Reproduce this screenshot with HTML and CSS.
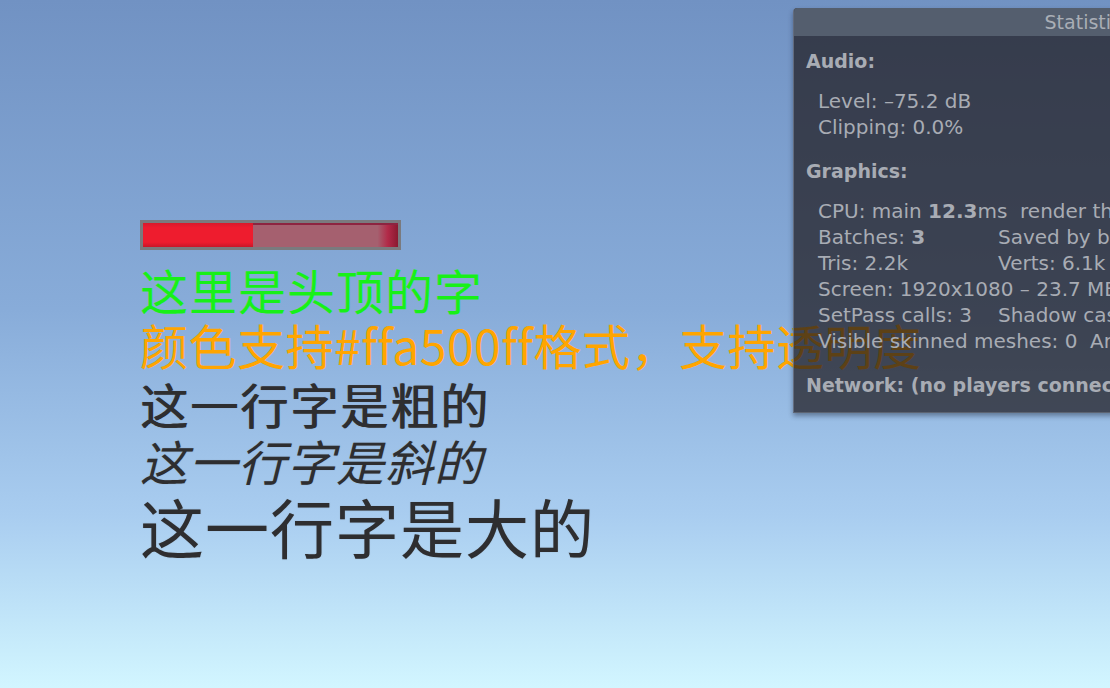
FILE: index.html
```html
<!DOCTYPE html>
<html lang="zh">
<head>
<meta charset="utf-8">
<title>HUD</title>
<link rel="stylesheet" href="styles.css">
</head>
<body>
<main class="scene">
  <div class="hp-bar"><div class="hp-fill" style="width:43%"></div></div>
  <div class="label">
    <div class="line green">这里是头顶的字</div>
    <div class="line orange">颜色支持#ffa500ff格式，支持透明度</div>
    <div class="line dark bold">这一行字是粗的</div>
    <div class="line dark italic">这一行字是斜的</div>
    <div class="line dark big">这一行字是大的</div>
  </div>
</main>
<section class="stats">
  <header class="stats-title">Statistics</header>
  <div class="stats-body">
    <h3 class="sec">Audio:</h3>
    <div class="rows">
      <div class="row">Level: –75.2 dB</div>
      <div class="row">Clipping: 0.0%</div>
    </div>
    <h3 class="sec">Graphics:</h3>
    <div class="rows">
      <div class="row">CPU: main <b>12.3</b>ms&nbsp; render thread <b>0.4</b>ms</div>
      <div class="row two"><span>Batches: <b>3</b></span><span>Saved by batching: 0</span></div>
      <div class="row two"><span>Tris: 2.2k</span><span>Verts: 6.1k</span></div>
      <div class="row">Screen: 1920x1080 – 23.7 MB</div>
      <div class="row two"><span>SetPass calls: 3</span><span>Shadow casters: 0</span></div>
      <div class="row">Visible skinned meshes: 0&nbsp; Animations: 0</div>
    </div>
    <h3 class="sec">Network: (no players connected)</h3>
  </div>
</section>
</body>
</html>
```

FILE: styles.css
```css
html, body {
  margin: 0;
  height: 100%;
}
body {
  width: 1110px;
  height: 688px;
  overflow: hidden;
  position: relative;
  background: linear-gradient(to bottom, #7192c3 0%, #88acd9 45%, #a9cdf0 75%, #d2f6ff 100%);
  font-family: "Noto Sans CJK SC", "Noto Sans", sans-serif;
}
.scene {
  padding: 220px 0 0 140px;
}
.hp-bar {
  width: 255px;
  height: 24px;
  border: 3px solid #7a7a7e;
  background: linear-gradient(to right, #a5606f 0%, #a5606f 92%, #b22a48 96%, #8a1a30 100%);
  box-shadow: inset 0 2px 0 #8d2440;
}
.hp-fill {
  height: 100%;
  background: linear-gradient(to bottom, #d81a2c 0%, #ee1c2e 20%, #ee1c2e 80%, #c81628 100%);
}
.label {
  margin-top: 11px;
}
.line {
  font-size: 48px;
  line-height: 57px;
  white-space: nowrap;
  letter-spacing: 1px;
}
.green { color: #18f018; }
.orange { color: #ffa500; margin-top: -2px; letter-spacing: 0.5px; }
.dark {
  color: #2e2e30;
  text-shadow: 0 0 1px rgba(120,130,140,0.6);
}
.bold {
  letter-spacing: 2px;
  text-shadow: 1px 0 0 #2e2e30, 0 0 1px rgba(120,130,140,0.6);
  margin-top: 2px;
}
.italic { font-style: italic; letter-spacing: 1px; }
.big {
  font-size: 64px;
  line-height: 72px;
  letter-spacing: 1px;
}

.stats {
  position: absolute;
  left: 793px;
  top: 8px;
  width: 588px;
  height: 404px;
  background: rgba(30, 26, 30, 0.72);
  border-left: 1px solid rgba(110, 120, 138, 0.8);
  border-bottom: 1px solid rgba(100, 108, 122, 0.8);
  box-shadow: 0 3px 5px rgba(30, 40, 60, 0.45);
  border-top-left-radius: 4px;
  font-family: "DejaVu Sans", "Open Sans", sans-serif;
  color: #a8acb4;
  overflow: hidden;
}
.stats-title {
  height: 28px;
  line-height: 29px;
  background: #545e6e;
  color: #a9aeb6;
  font-size: 19px;
  text-align: center;
}
.stats-body {
  padding: 12px 0 0 12px;
}
.sec {
  margin: 0;
  font-size: 19px;
  font-weight: bold;
  line-height: 26px;
}
.rows {
  padding: 14px 0 18px 12px;
  font-size: 20px;
  line-height: 26px;
}
.row {
  white-space: nowrap;
}
.row.two {
  display: grid;
  grid-template-columns: 180px auto;
}
.row b { font-weight: bold; }
```
